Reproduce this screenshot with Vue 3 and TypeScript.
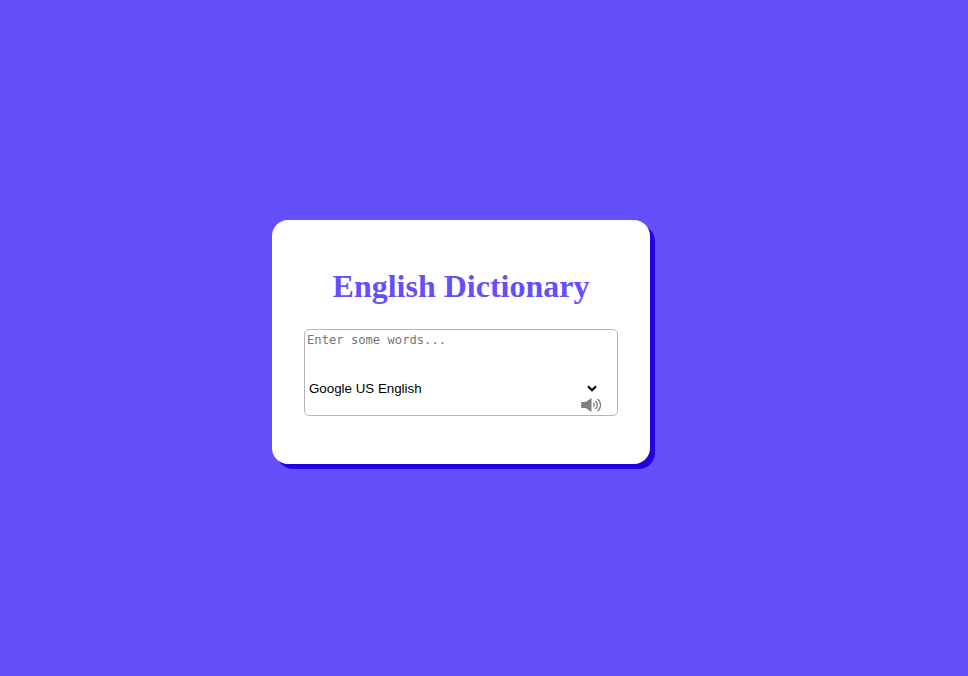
<script setup lang="ts">
import { ref } from 'vue'

const words = ref('')
const voices: string[] = ['Google US English']
const voice = ref(voices[0])

function speak(): void {
  if (!words.value || !('speechSynthesis' in window)) return
  window.speechSynthesis.speak(new SpeechSynthesisUtterance(words.value))
}
</script>

<template>
  <main class="page">
    <section class="card">
      <h1 class="title">English Dictionary</h1>
      <div class="box">
        <textarea v-model="words" class="words" placeholder="Enter some words..." spellcheck="false"></textarea>
        <div class="picker">
          <select v-model="voice" class="voice" aria-label="Voice">
            <option v-for="v in voices" :key="v" :value="v">{{ v }}</option>
          </select>
          <svg class="chevron" viewBox="0 0 10 7" aria-hidden="true">
            <path d="M1 1.2 5 5.2 9 1.2" />
          </svg>
        </div>
        <button class="speak" type="button" aria-label="Speak" @click="speak">
          <svg class="speaker" viewBox="0 0 21 16" aria-hidden="true">
            <path class="cone" d="M0.2 5h4.300L10.500 1v14L4.500 11H0.200z" />
            <path class="wave" d="M12.300 6a2.600 2.600 0 0 1 0 4M14.300 3.900a5.200 5.200 0 0 1 0 8.200M16.500 1.900a7.700 7.700 0 0 1 0 12.200" />
          </svg>
        </button>
      </div>
    </section>
  </main>
</template>

<style>
body {
  background: #654ffa;
}
</style>

<style scoped>
.page {
  box-sizing: border-box;
  min-height: 100vh;
  display: flex;
  justify-content: center;
  align-items: center;
  padding: 8px 46px 0 0;
}

.card {
  box-sizing: border-box;
  width: 378px;
  height: 244px;
  padding: 48px 32px;
  border-radius: 16px;
  background: #fff;
  box-shadow: 5px 5px 0 #2400e0;
}

.title {
  margin: 0 0 24px;
  font: bold 32px/37px "Liberation Serif", "Times New Roman", serif;
  text-align: center;
  white-space: nowrap;
  color: #654ffa;
}

.box {
  box-sizing: border-box;
  height: 87px;
  display: flex;
  flex-direction: column;
  border: 1px solid #b5b5b5;
  border-radius: 5px;
}

.words {
  box-sizing: border-box;
  width: 100%;
  height: 48px;
  margin: 0;
  padding: 2px;
  border: 0;
  outline: 0;
  resize: none;
  background: transparent;
  font: 12.17px/16px "DejaVu Sans Mono", monospace;
}

.words::placeholder {
  color: #757575;
}

.picker {
  height: 20px;
  padding: 0 20px 0 4px;
  display: flex;
  align-items: center;
}

.voice {
  flex: 1;
  height: 20px;
  margin: 0;
  padding: 2px 0 0;
  border: 0;
  outline: 0;
  appearance: none;
  background: transparent;
  color: #000;
  font: 13.333px/18px "Liberation Sans", Arial, sans-serif;
}

.chevron {
  width: 10px;
  height: 7px;
  fill: none;
  stroke: #000;
  stroke-width: 2.200;
}

.speak {
  align-self: flex-end;
  height: 16px;
  margin: -1px 15px 0 0;
  padding: 0;
  border: 0;
  background: none;
}

.speaker {
  display: block;
  width: 21px;
  height: 16px;
}

.cone {
  fill: #808080;
}

.wave {
  fill: none;
  stroke: #808080;
  stroke-width: 1.300;
}
</style>
